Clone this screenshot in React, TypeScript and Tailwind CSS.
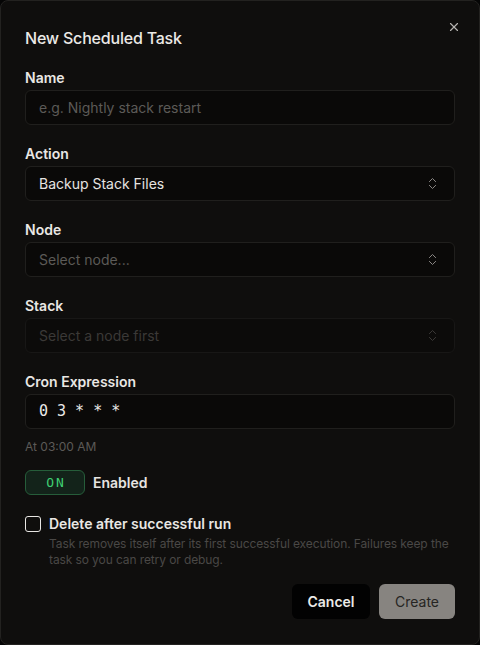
import { ChevronsUpDown, X } from "lucide-react";

const sans = "font-['Inter','Noto_Sans',sans-serif]";
const mono = "font-['DejaVu_Sans_Mono','Liberation_Mono',monospace]";

function Label({ children }: { children: React.ReactNode }) {
  return <div className="text-sm font-semibold leading-5 text-[#e9e7e4] mb-[2px]">{children}</div>;
}

function SelectBox({ value, muted, disabled }: { value: string; muted?: boolean; disabled?: boolean }) {
  return (
    <div
      className={`h-[35px] rounded-md border flex items-center justify-between pl-[13px] pr-[14px] ${
        disabled ? "border-[#181716] bg-[#0c0b0a]" : "border-[#201f1d] bg-[#0a0908]"
      }`}
    >
      <span
        className={`text-sm ${
          disabled ? "text-[#3b3937]" : muted ? "text-[#5c5a57]" : "text-[#e6e4e1]"
        }`}
      >
        {value}
      </span>
      <ChevronsUpDown size={15} strokeWidth={1.6} className={disabled ? "text-[#3b3937]" : "text-[#8a8784]"} />
    </div>
  );
}

export default function App() {
  return (
    <div className={`w-[480px] h-[645px] bg-[#050505] ${sans}`}>
      <div className="relative h-full rounded-lg border border-[#232220] bg-[#0f0e0d] px-6 pt-[25px]">
        <button className="absolute right-[18px] top-[19px] text-[#b5b3b0]">
          <X size={14} strokeWidth={2} />
        </button>
        <h2 className="text-base font-medium leading-6 text-[#ebe9e6] tracking-[-0.2px]">New Scheduled Task</h2>

        <div className="mt-[18px]">
          <Label>Name</Label>
          <div className="h-[35px] rounded-md border border-[#201f1d] bg-[#0a0908] flex items-center pl-[13px]">
            <span className="text-sm text-[#5c5a57]">e.g. Nightly stack restart</span>
          </div>
        </div>

        <div className="mt-[19px]">
          <Label>Action</Label>
          <SelectBox value="Backup Stack Files" />
        </div>

        <div className="mt-[19px]">
          <Label>Node</Label>
          <SelectBox value="Select node..." muted />
        </div>

        <div className="mt-[19px]">
          <Label>Stack</Label>
          <SelectBox value="Select a node first" disabled />
        </div>

        <div className="mt-[19px]">
          <Label>Cron Expression</Label>
          <div className="h-[35px] rounded-md border border-[#201f1d] bg-[#0a0908] flex items-center pl-[13px]">
            <span className={`text-[15px] font-medium text-[#ecebe8] ${mono} whitespace-pre`}>0 3 * * *</span>
          </div>
          <div className="mt-[10px] text-xs leading-4 text-[#5c5a57]">At 03:00 AM</div>
        </div>

        <div className="mt-[15px] flex items-center gap-2">
          <div className={`w-[60px] h-[25px] rounded-md border border-[#265d3a] bg-[#13231a] flex items-center justify-center text-[13px] tracking-[2px] pl-[2px] text-[#3fcf73] ${mono}`}>
            ON
          </div>
          <span className="text-sm font-semibold text-[#e6e4e1]">Enabled</span>
        </div>

        <div className="mt-[19px] flex gap-2">
          <div className="w-4 h-4 mt-[2px] rounded-[3px] border-[1.5px] border-[#e8e6e3] shrink-0" />
          <div>
            <div className="text-sm font-semibold leading-5 text-[#e9e7e4]">Delete after successful run</div>
            <p className="mt-[2px] text-xs leading-4 text-[#4a4846] tracking-[-0.1px]">
              Task removes itself after its first successful execution. Failures keep the task so you can retry or debug.
            </p>
          </div>
        </div>

        <div className="mt-4 flex justify-end gap-[9px]">
          <button className="h-[35px] w-[78px] rounded-md bg-[#020202] text-sm font-semibold text-[#ecebe8]">Cancel</button>
          <button className="h-[35px] w-[76px] rounded-md bg-[#878480] text-sm text-[#262523]">Create</button>
        </div>
      </div>
    </div>
  );
}
